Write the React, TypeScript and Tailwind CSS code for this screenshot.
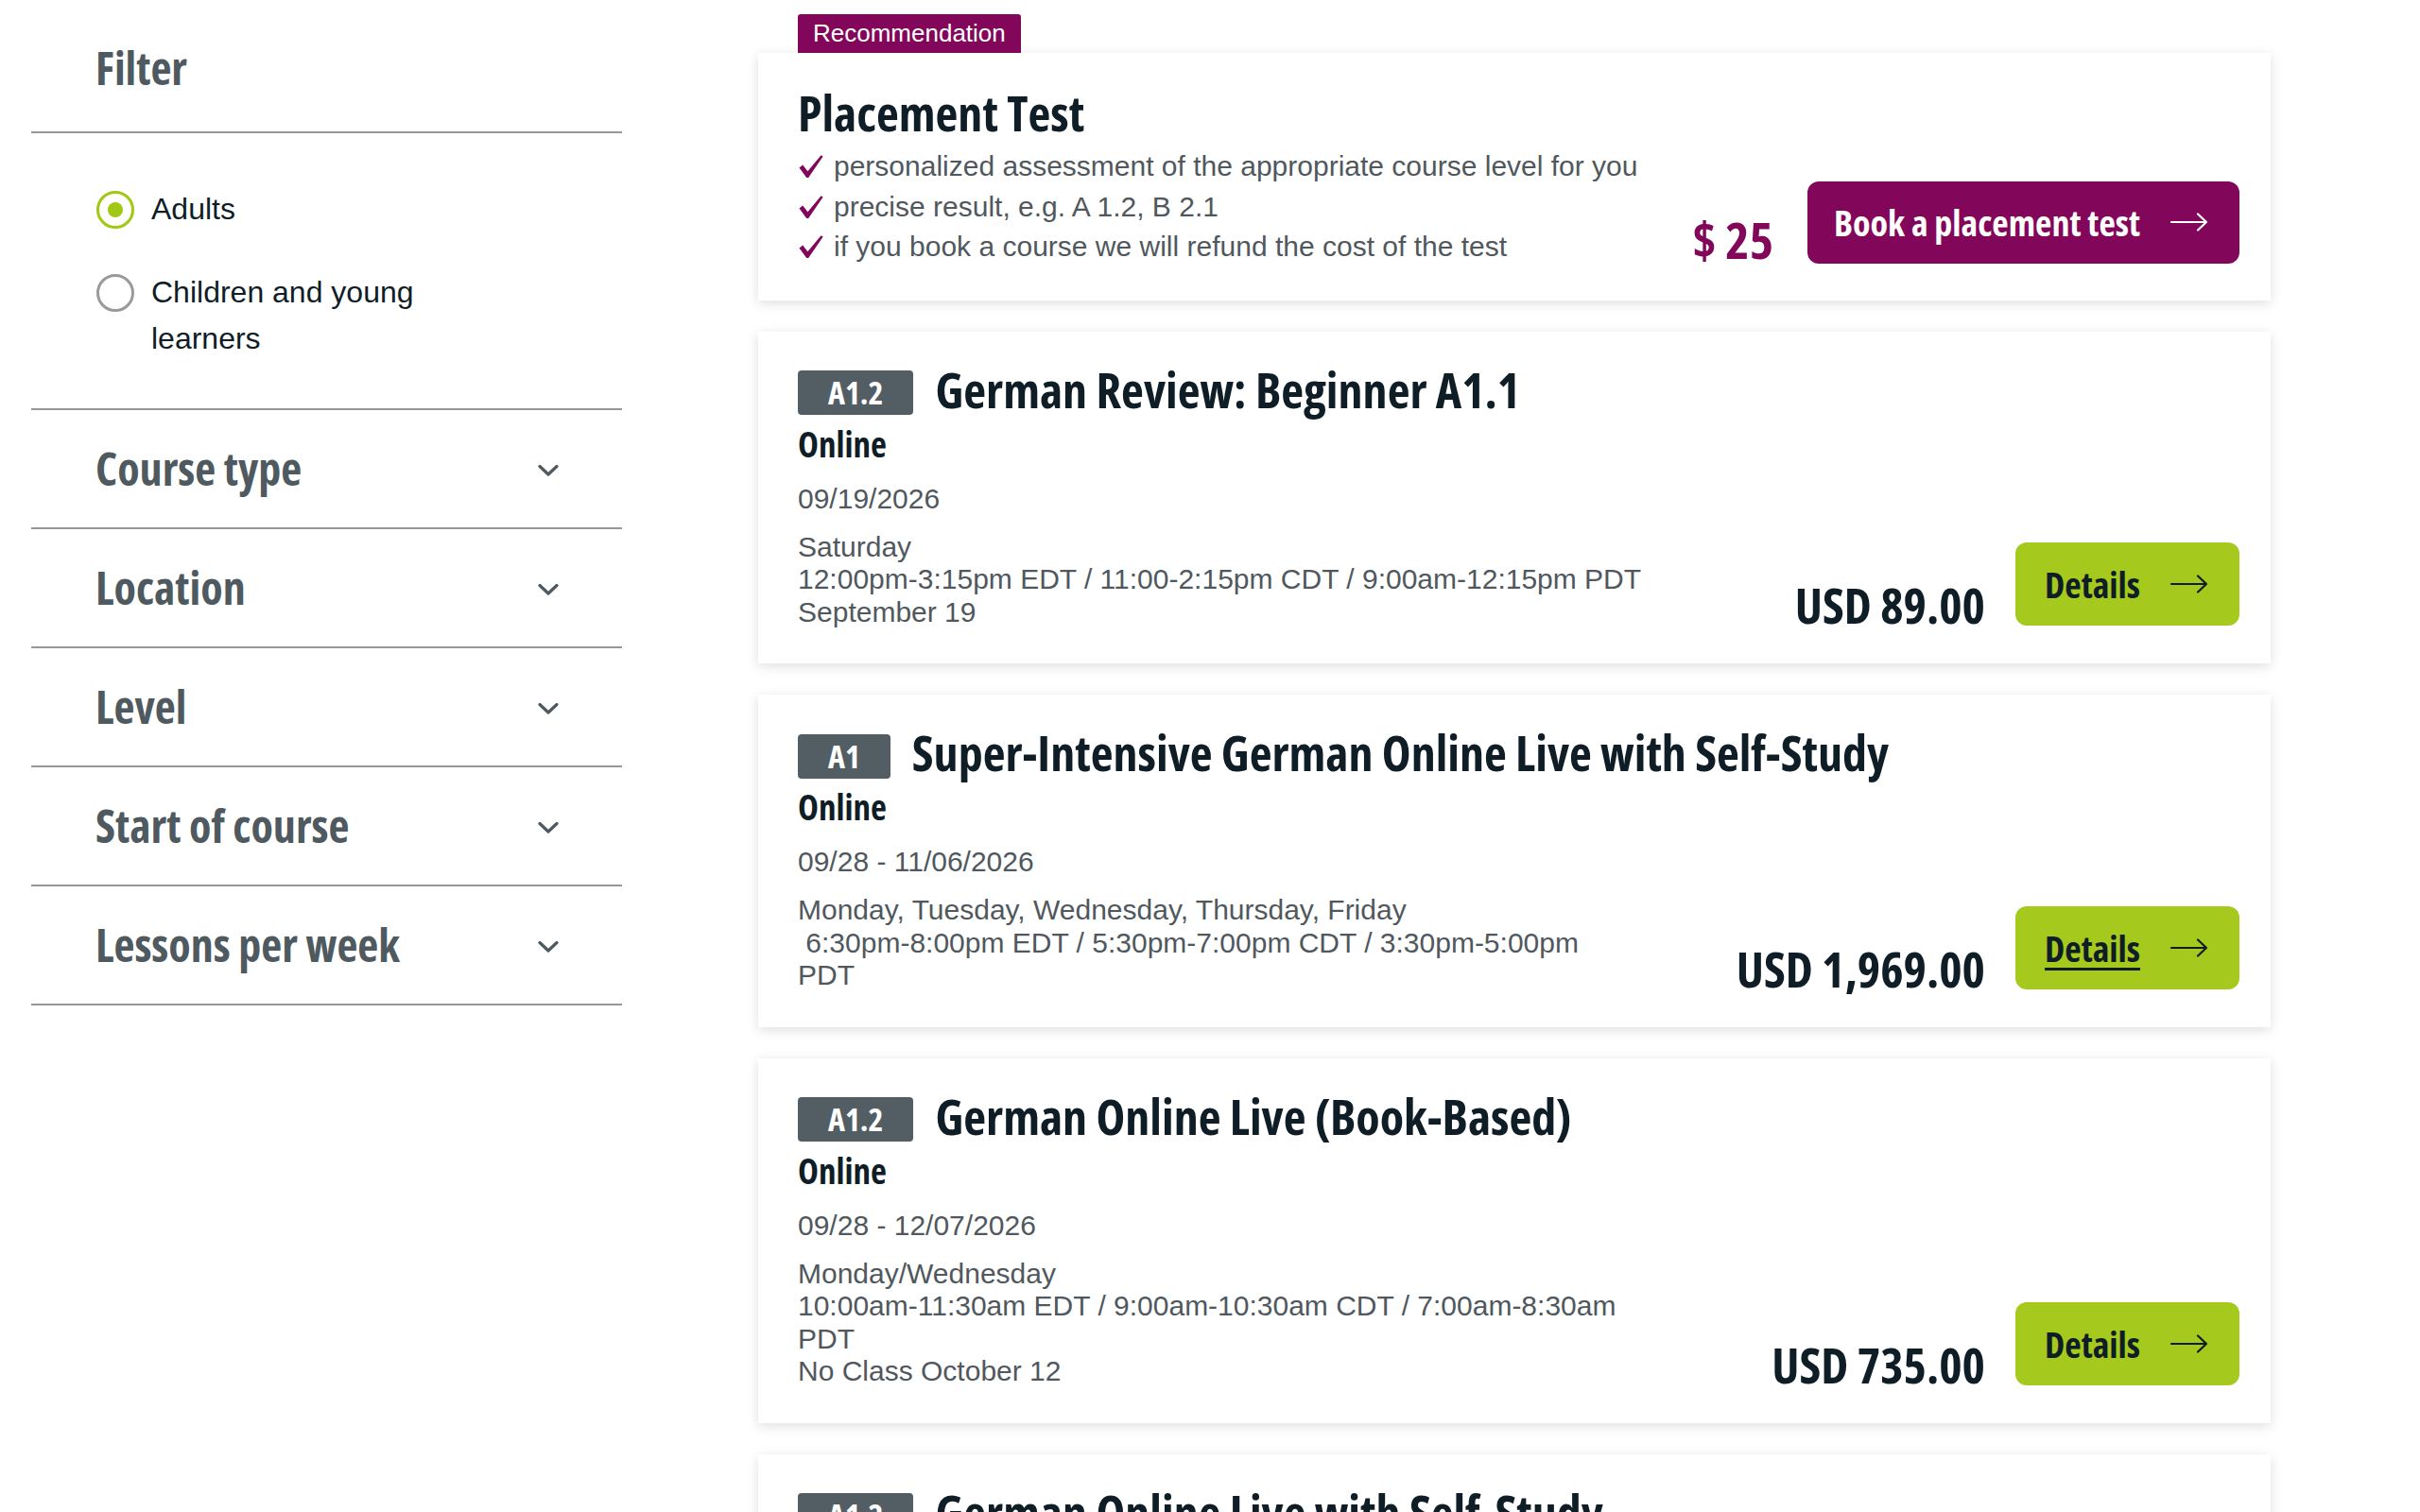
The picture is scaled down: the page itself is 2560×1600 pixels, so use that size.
import React from "react";

const HEAD = "font-['Open_Sans',sans-serif] [font-stretch:75%] font-bold";
const SIDE = "font-['Open_Sans',sans-serif] [font-stretch:75%] font-bold";
const BODY = "font-['Liberation_Sans','Arial',sans-serif]";

function Chevron() {
  return (
    <svg width="22" height="14" viewBox="0 0 22 14" fill="none">
      <path d="M2 2.5 L11 11 L20 2.5" stroke="#4e5960" strokeWidth="3.2" strokeLinecap="round" strokeLinejoin="round" />
    </svg>
  );
}

function Arrow({ color }: { color: string }) {
  return (
    <svg width="40" height="22" viewBox="0 0 40 22" fill="none" className="shrink-0">
      <path d="M1 11 H38 M29 2.5 L38 11 L29 19.5" stroke={color} strokeWidth="2.2" strokeLinecap="round" strokeLinejoin="round" />
    </svg>
  );
}

function Check() {
  return (
    <svg width="28" height="26" viewBox="0 0 28 26" className="shrink-0">
      <path d="M1.5 14.5 L5.2 11.6 L10.4 18.2 L24.6 1.2 L26.6 2.6 L11.2 25 L9.2 25 Z" fill="#82075a" />
    </svg>
  );
}

function Accordion({ label }: { label: string }) {
  return (
    <div className="h-[126px] flex items-center justify-between pl-[68px] pr-[67px] border-b-2 border-[#979797]">
      <span className={`${SIDE} text-[48px] leading-none text-[#4e5960]`}>{label}</span>
      <span className="mt-[3px]">
        <Chevron />
      </span>
    </div>
  );
}

type Course = {
  level: string;
  title: string;
  date: string;
  lines: string[];
  price: string;
  underline?: boolean;
};

const courses: Course[] = [
  {
    level: "A1.2",
    title: "German Review: Beginner A1.1",
    date: "09/19/2026",
    lines: ["Saturday", "12:00pm-3:15pm EDT / 11:00-2:15pm CDT / 9:00am-12:15pm PDT", "September 19"],
    price: "USD 89.00",
  },
  {
    level: "A1",
    title: "Super-Intensive German Online Live with Self-Study",
    date: "09/28 - 11/06/2026",
    lines: ["Monday, Tuesday, Wednesday, Thursday, Friday", "\u00a06:30pm-8:00pm EDT / 5:30pm-7:00pm CDT / 3:30pm-5:00pm PDT"],
    price: "USD 1,969.00",
    underline: true,
  },
  {
    level: "A1.2",
    title: "German Online Live (Book-Based)",
    date: "09/28 - 12/07/2026",
    lines: ["Monday/Wednesday", "10:00am-11:30am EDT / 9:00am-10:30am CDT / 7:00am-8:30am PDT", "No Class October 12"],
    price: "USD 735.00",
  },
  {
    level: "A1.2",
    title: "German Online Live with Self-Study",
    date: "09/28 - 12/07/2026",
    lines: ["Monday/Wednesday", "10:00am-11:30am EDT / 9:00am-10:30am CDT / 7:00am-8:30am PDT"],
    price: "USD 1,095.00",
  },
];

function CourseCard({ c }: { c: Course }) {
  return (
    <div className="bg-white mt-[33px] pl-[42px] pr-[33px] pt-[36px] pb-[37px] shadow-[0_3px_12px_rgba(0,0,0,0.13)]">
      <div className="flex items-center gap-[23px]">
        <span className={`${HEAD} h-[47px] px-[32px] rounded-[4px] bg-[#535d64] text-white text-[34px] leading-[47px]`}>
          {c.level}
        </span>
        <h3 className={`${HEAD} text-[52px] leading-[50px] pb-[8px] text-[#0f1d27]`}>{c.title}</h3>
      </div>
      <div className="flex items-end">
        <div className="flex-1 min-w-0 pr-[110px]">
          <div className={`${HEAD} mt-[5px] text-[37px] leading-[40px] text-[#0f1d27]`}>Online</div>
          <div className={`${BODY} mt-[21px] text-[30px] leading-[34px] text-[#50585e]`}>{c.date}</div>
          <div className={`${BODY} mt-[17px] text-[30px] leading-[34.5px] text-[#50585e]`}>
            {c.lines.map((l, i) => (
              <div key={i}>{l}</div>
            ))}
          </div>
        </div>
        <div className={`${HEAD} text-[52px] leading-[50px] text-[#0f1d27] whitespace-nowrap shrink-0`}>{c.price}</div>
        <a className="ml-[32px] mb-[3px] h-[88px] pl-[31px] pr-[33px] rounded-[12px] bg-[#a5c91d] flex items-center gap-[32px] shrink-0">
          <span className={`${HEAD} text-[38px] leading-none text-[#0f1d27] ${c.underline ? "underline decoration-[3px] underline-offset-[6px]" : ""}`}>
            Details
          </span>
          <Arrow color="#0f1d27" />
        </a>
      </div>
    </div>
  );
}

export default function App() {
  return (
    <div className={`${BODY} h-screen overflow-hidden bg-white flex`}>
      <aside className="w-[658px] shrink-0 pl-[33px]">
        <div className="h-[141px] flex items-center pl-[68px] border-b-2 border-[#979797]">
          <h2 className={`${SIDE} text-[48px] leading-none text-[#4e5960] mt-[4px]`}>Filter</h2>
        </div>
        <div className="pt-[56px] pb-[49px] pl-[69px] border-b-2 border-[#979797]">
          <label className="flex items-start gap-[18px]">
            <span className="mt-[4.5px] w-[40px] h-[40px] rounded-full border-[3px] border-[#a0c814] flex items-center justify-center shrink-0">
              <span className="w-[16px] h-[16px] rounded-full bg-[#a0c814]" />
            </span>
            <span className="text-[32px] leading-[49px] text-[#0f1d27]">Adults</span>
          </label>
          <label className="mt-[39px] flex items-start gap-[18px]">
            <span className="mt-[4.5px] w-[40px] h-[40px] rounded-full border-[3px] border-[#9a9a9a] shrink-0" />
            <span className="w-[330px] text-[32px] leading-[49px] text-[#0f1d27]">Children and young learners</span>
          </label>
        </div>
        <Accordion label="Course type" />
        <Accordion label="Location" />
        <Accordion label="Level" />
        <Accordion label="Start of course" />
        <Accordion label="Lessons per week" />
      </aside>
      <main className="ml-[144px] w-[1600px] shrink-0 pt-[15px]">
        <span className="ml-[42px] inline-block h-[41px] px-[16px] rounded-t-[3px] bg-[#82075a] text-white text-[26px] leading-[41px]">
          Recommendation
        </span>
        <div className="bg-white pl-[42px] pr-[33px] pt-[33px] pb-[35px] flex items-end justify-between shadow-[0_3px_12px_rgba(0,0,0,0.13)]">
          <div className="shrink-0">
            <h2 className={`${HEAD} text-[52px] leading-[60px] text-[#0f1d27]`}>Placement Test</h2>
            <ul className="mt-[6px] text-[30px] leading-[42.5px] text-[#50585e] whitespace-nowrap">
              <li className="flex items-center gap-[10px]"><Check />personalized assessment of the appropriate course level for you</li>
              <li className="flex items-center gap-[10px]"><Check />precise result, e.g. A 1.2, B 2.1</li>
              <li className="flex items-center gap-[10px]"><Check />if you book a course we will refund the cost of the test</li>
            </ul>
          </div>
          <div className="flex items-end gap-[36px] mb-[4px] shrink-0">
            <span className={`${HEAD} text-[54px] leading-[52px] text-[#82075a] whitespace-nowrap`}>$ 25</span>
            <a className="h-[87px] pl-[28px] pr-[33px] rounded-[12px] bg-[#82075a] flex items-center gap-[32px] whitespace-nowrap">
              <span className={`${HEAD} text-[38px] leading-none text-white`}>Book a placement test</span>
              <Arrow color="#ffffff" />
            </a>
          </div>
        </div>
        {courses.map((c, i) => (
          <CourseCard key={i} c={c} />
        ))}
      </main>
    </div>
  );
}
